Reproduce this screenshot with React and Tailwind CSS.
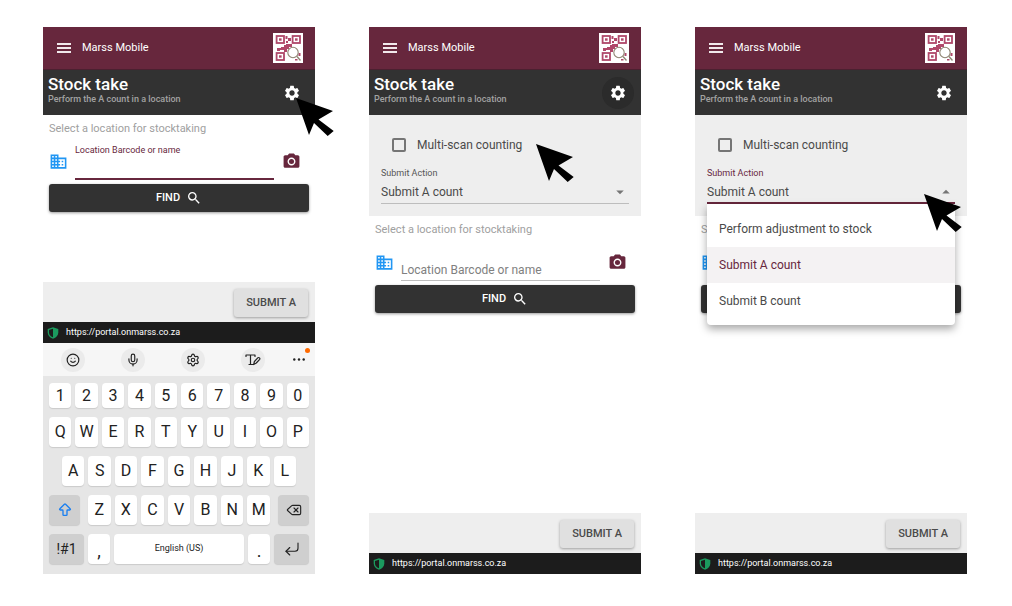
import { useId, useState } from 'react';
import { MdSettings, MdBusiness, MdPhotoCamera, MdSearch, MdArrowDropDown, MdArrowDropUp } from 'react-icons/md';
import { Smile, Mic, Settings, ArrowBigUp, Delete, CornerDownLeft } from 'lucide-react';
import clsx from 'clsx';

const ACTIONS = ['Perform adjustment to stock', 'Submit A count', 'Submit B count'];

const DIGITS = ['1', '2', '3', '4', '5', '6', '7', '8', '9', '0'];
const TOP_ROW = ['Q', 'W', 'E', 'R', 'T', 'Y', 'U', 'I', 'O', 'P'];
const HOME_ROW = ['A', 'S', 'D', 'F', 'G', 'H', 'J', 'K', 'L'];
const BOTTOM_ROW = ['Z', 'X', 'C', 'V', 'B', 'N', 'M'];

function Logo() {
  return (
    <svg viewBox="0 0 30 30" className="w-[30px] h-[30px] bg-white" aria-hidden="true">
      <g fill="none" stroke="#b0486a" strokeWidth="1.8">
        <rect x="3.6" y="3" width="7.4" height="7" />
        <rect x="19.6" y="3" width="7.4" height="7" />
        <rect x="3.6" y="20" width="7.4" height="7" />
      </g>
      <g fill="#b0486a">
        <rect x="6" y="5.3" width="2.6" height="2.4" />
        <rect x="22" y="5.3" width="2.6" height="2.4" />
        <rect x="6" y="22.3" width="2.6" height="2.4" />
        <path d="M12.5 3h2v3h-2zM15 5h3v3h-3zM13 8h2v2h-2zM11 12h2v-1h6v3h-3v2h-2v3h-3v-2H7v1H4v-3h4v-1h3zM25.5 20h2v3h-2zM22 26h2.500v1.500H22z" />
      </g>
      <circle cx="20" cy="19.5" r="5.2" fill="#fff" stroke="#8f8573" strokeWidth="1.1" />
      <path d="M24 23.5l3.500 4" stroke="#8f8573" strokeWidth="1.4" />
    </svg>
  );
}

// Large pointer that marks where to tap
function Pointer({ className }) {
  return (
    <svg viewBox="0 0 38 38" className={clsx('absolute z-20 w-[38px] h-[38px] pointer-events-none', className)} aria-hidden="true">
      <path d="M0 0L37 13L22.5 21.5L37.7 33L31.7 38L18 25L13 37z" fill="#000" />
    </svg>
  );
}

function AppHeader({ pressed }) {
  return (
    <header>
      <div className="flex items-center h-[43px] pl-[14px] pr-3 bg-[#67273d] border-b border-[#4b2030] text-white">
        <button type="button" aria-label="Menu">
          <svg viewBox="0 0 14 10" className="w-[14px] h-[10px]" fill="#f1e9ec" aria-hidden="true">
            <path d="M0 0h14v2H0zM0 4h14v2H0zM0 8h14v2H0z" />
          </svg>
        </button>
        <span className="ml-[11px] text-[11px] flex-1">Marss Mobile</span>
        <Logo />
      </div>
      <div className="flex items-center h-[45px] pl-[5px] pr-[7px] bg-[#323232]">
        <div className="flex-1 pb-2">
          <h1 className="text-[17px] leading-5 font-medium text-white">Stock take</h1>
          <p className="text-[9px] leading-[10px] font-medium text-[#a3a3a3]">Perform the A count in a location</p>
        </div>
        <button
          type="button"
          aria-label="Settings"
          className={clsx('flex items-center justify-center w-8 h-8 rounded-full text-white', pressed && 'bg-[#2b2b2b]')}
        >
          <MdSettings className="w-[18px] h-[18px]" />
        </button>
      </div>
    </header>
  );
}

function SettingsPanel({ open }) {
  const id = useId();
  const [action, setAction] = useState('Submit A count');
  const Arrow = open ? MdArrowDropUp : MdArrowDropDown;

  return (
    <section className="px-3 pt-5 pb-3 bg-[#eeeeee]">
      <div className="flex items-center h-5 pl-[11px] gap-[11px]">
        <input id={`${id}-multi`} type="checkbox" className="appearance-none w-[14px] h-[14px] rounded-[2px] border-2 border-[#757575]" />
        <label htmlFor={`${id}-multi`} className="text-xs text-[#4a4a4a]">Multi-scan counting</label>
      </div>
      <div className="relative mt-[10px]">
        <label htmlFor={`${id}-action`} className={clsx('block text-[9px] leading-4', open ? 'text-[#67273d]' : 'text-[#555555]')}>
          Submit Action
        </label>
        <div className={clsx('flex items-center h-[23px]', open ? 'border-b-2 border-[#67273d]' : 'border-b border-[#bdbdbd]')}>
          <select
            id={`${id}-action`}
            value={action}
            onChange={(e) => setAction(e.target.value)}
            className="appearance-none flex-1 bg-transparent text-xs leading-5 text-[#4a4a4a] outline-none"
          >
            {ACTIONS.map((a) => (
              <option key={a}>{a}</option>
            ))}
          </select>
          <Arrow className="w-[18px] h-[18px] text-[#757575]" />
        </div>
        {open && (
          <ul className="absolute z-10 top-full inset-x-0 pt-[7px] pb-[6px] rounded-b bg-white shadow-[0_4px_8px_rgba(0,0,0,0.35)]">
            {ACTIONS.map((a) => (
              <li key={a}>
                <button
                  type="button"
                  onClick={() => setAction(a)}
                  className={clsx('block w-full h-9 px-3 text-left text-xs', a === action ? 'bg-[#f4f2f3] text-[#67273d]' : 'text-[#4a4a4a]')}
                >
                  {a}
                </button>
              </li>
            ))}
          </ul>
        )}
      </div>
    </section>
  );
}

function LocationForm({ focused }) {
  const id = useId();
  return (
    <section className="px-[6px]">
      <p className="h-[27px] text-[11px] leading-[27px] text-[#a0a0a0]">Select a location for stocktaking</p>
      <div className="flex items-center h-[38px] pr-2">
        <MdBusiness className="w-[19px] h-[19px] text-[#2196f3]" />
        <div className="flex-1 min-w-0 self-stretch flex flex-col justify-end ml-[7px] mr-2">
          {focused && (
            <label htmlFor={id} className="text-[9px] leading-4 text-[#67273d]">Location Barcode or name</label>
          )}
          <input
            id={id}
            type="text"
            aria-label={focused ? undefined : 'Location Barcode or name'}
            placeholder={focused ? undefined : 'Location Barcode or name'}
            className={clsx(
              'w-full h-[22px] text-xs outline-none placeholder:text-[#808080]',
              focused ? 'border-b-2 border-[#67273d]' : 'border-b border-[#bdbdbd]'
            )}
          />
        </div>
        <button type="button" aria-label="Scan with camera" className="text-[#67273d]">
          <MdPhotoCamera className="w-[19px] h-[19px]" />
        </button>
      </div>
      <button
        type="button"
        className="flex items-center justify-center gap-[6px] w-full h-7 mt-1 rounded-[3px] bg-[#323232] text-white text-[11px] font-medium shadow-[0_1px_3px_rgba(0,0,0,0.4)]"
      >
        FIND
        <MdSearch className="w-4 h-4" />
      </button>
    </section>
  );
}

function Footer() {
  return (
    <footer className="mt-auto">
      <div className="flex items-center justify-end h-10 pt-[2px] pr-[7px] bg-[#eeeeee]">
        <button type="button" className="h-7 px-3 rounded-[3px] bg-[#e0e0e0] text-[11px] font-medium text-[#4a4a4a] shadow-[0_1px_3px_rgba(0,0,0,0.35)]">
          SUBMIT A
        </button>
      </div>
      <div className="flex items-center h-[21px] pl-1 gap-[7px] bg-[#1c1c1c] text-white text-[9px]">
        <svg viewBox="0 0 12 12" className="w-3 h-3" aria-hidden="true">
          <path d="M6 .3L11.3 2v3.6c0 2.9-2 5.1-5.3 6.2C2.7 10.7.7 8.5.7 5.6V2z" fill="#1b9a5e" />
          <path d="M6 1.7v8.6C3.3 9.2 2 7.6 2 5.5V3z" fill="#1c1c1c" />
        </svg>
        <span>https://portal.onmarss.co.za</span>
      </div>
    </footer>
  );
}

function Key({ className, children, label }) {
  return (
    <button
      type="button"
      aria-label={label}
      className={clsx('flex items-center justify-center rounded-[4px] text-[#222222] shadow-[0_1px_1px_rgba(0,0,0,0.12)]', className)}
    >
      {children}
    </button>
  );
}

function KeyRow({ keys, className }) {
  return (
    <div className={clsx('flex gap-1', className)}>
      {keys.map((k) => (
        <Key key={k} className="flex-1 bg-white text-base">{k}</Key>
      ))}
    </div>
  );
}

function ToolButton({ label, children }) {
  return (
    <button type="button" aria-label={label} className="flex shrink-0 items-center justify-center w-6 h-6 rounded-full bg-[#ebebeb]">
      {children}
    </button>
  );
}

function Keyboard() {
  return (
    <div className="bg-[#e6e6e6]">
      <div className="flex items-center gap-9 h-[33px] pl-[18px] pr-[9px] bg-[#f6f6f6] text-[#222222]">
        <ToolButton label="Emoji"><Smile className="w-[14px] h-[14px]" /></ToolButton>
        <ToolButton label="Voice input"><Mic className="w-[14px] h-[14px]" /></ToolButton>
        <ToolButton label="Keyboard settings"><Settings className="w-[14px] h-[14px]" /></ToolButton>
        <ToolButton label="Handwriting">
          <svg viewBox="0 0 16 14" className="w-4 h-[14px]" fill="none" stroke="currentColor" strokeWidth="1.2" strokeLinecap="round" strokeLinejoin="round" aria-hidden="true">
            <path d="M1 3.5V2h9v1.5M5.5 2v9.5H4M5.5 11.5h3" />
            <path d="M8.7 11.5l.7-3L13 4.7c1-.6 2.3.5 1.7 1.600L11.3 10z" />
          </svg>
        </ToolButton>
        <button type="button" aria-label="More" className="relative flex shrink-0 items-center justify-center w-[14px] h-6 -ml-[9px]">
          <svg viewBox="0 0 12 3" className="w-3 h-[3px]" fill="currentColor" aria-hidden="true">
            <circle cx="1.3" cy="1.5" r="1.2" />
            <circle cx="6" cy="1.5" r="1.2" />
            <circle cx="10.7" cy="1.5" r="1.2" />
          </svg>
          <span className="absolute top-0 -right-1 w-[5px] h-[5px] rounded-full bg-[#ff6a00]" />
        </button>
      </div>
      <div className="flex flex-col gap-[9px] px-[6px] pt-[7px] pb-[10px]">
        <KeyRow keys={DIGITS} className="h-[25px]" />
        <KeyRow keys={TOP_ROW} className="h-[30px]" />
        <KeyRow keys={HOME_ROW} className="h-[30px] px-[13px]" />
        <div className="flex gap-2 h-[30px]">
          <Key label="Shift" className="w-[31px] bg-[#cfcfcf]">
            <ArrowBigUp className="w-4 h-4 text-[#1a7ff0]" />
          </Key>
          <KeyRow keys={BOTTOM_ROW} className="flex-1" />
          <Key label="Backspace" className="w-[31px] bg-[#cfcfcf]">
            <Delete className="w-4 h-4" strokeWidth={1.7} />
          </Key>
        </div>
        <div className="flex gap-1 h-[30px]">
          <Key className="w-[35px] bg-[#cfcfcf] text-sm">!#1</Key>
          <Key className="w-[22px] pt-1 bg-white text-lg">,</Key>
          <Key className="flex-1 bg-white text-[9px]">English (US)</Key>
          <Key className="w-[22px] pt-1 bg-white text-lg">.</Key>
          <Key label="Enter" className="w-[35px] bg-[#cfcfcf]">
            <CornerDownLeft className="w-[18px] h-[18px]" strokeWidth={1.5} />
          </Key>
        </div>
      </div>
    </div>
  );
}

function Phone({ children }) {
  return <article className="relative flex flex-col min-w-0 bg-white">{children}</article>;
}

export default function App() {
  return (
    <main className="grid grid-cols-3 gap-[54px] min-h-screen pt-[27px] pb-8 pl-[43px] pr-[45px] bg-white font-['Roboto',sans-serif]">
      {/* Open the settings */}
      <Phone>
        <AppHeader />
        <LocationForm focused />
        <Footer />
        <Keyboard />
        <Pointer className="left-[253px] top-[71px]" />
      </Phone>

      {/* Toggle multi-scan */}
      <Phone>
        <AppHeader pressed />
        <SettingsPanel />
        <LocationForm />
        <Footer />
        <Pointer className="left-[167px] top-[117px]" />
      </Phone>

      {/* Pick the submit action */}
      <Phone>
        <AppHeader />
        <SettingsPanel open />
        <LocationForm />
        <Footer />
        <Pointer className="left-[229px] top-[167px]" />
      </Phone>
    </main>
  );
}
